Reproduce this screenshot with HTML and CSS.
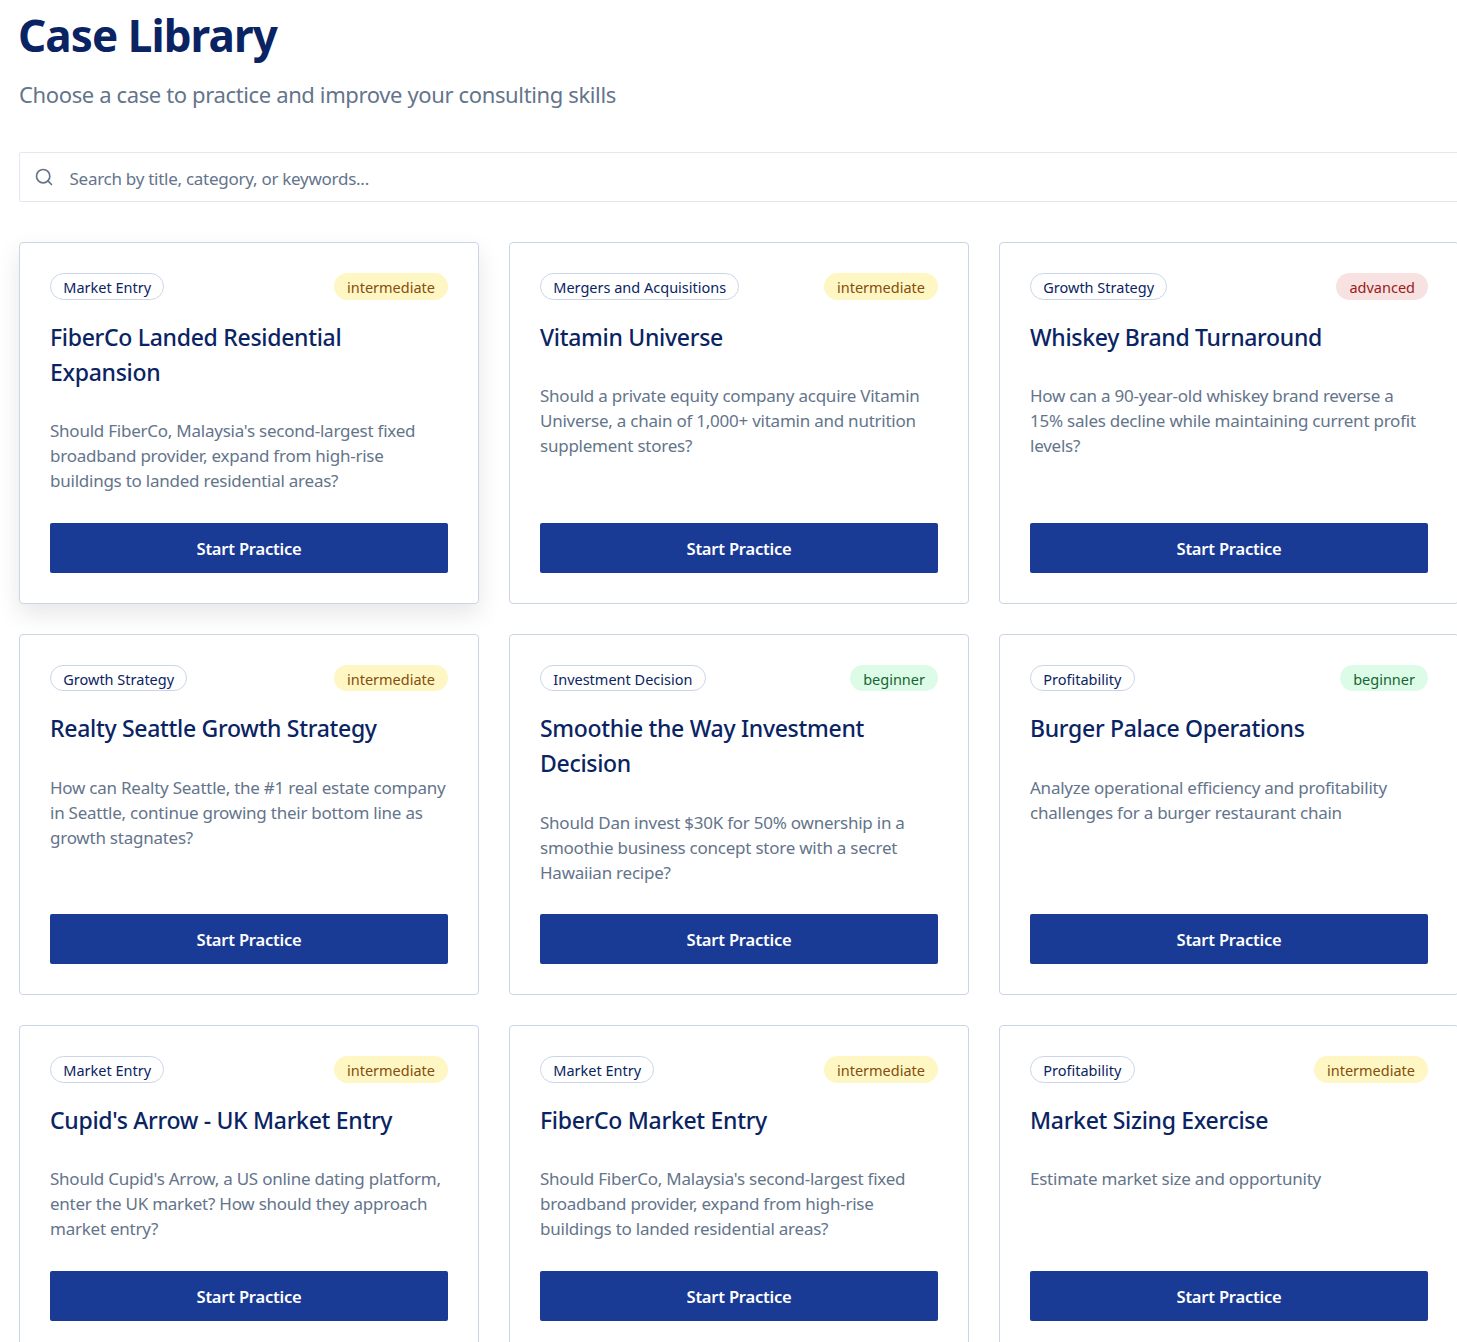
FILE: index.html
```html
<!DOCTYPE html>
<html lang="en">
<head>
<meta charset="utf-8">
<title>Case Library</title>
<link rel="stylesheet" href="styles.css">
</head>
<body>
<main class="page">
  <h1 class="page-title">Case Library</h1>
  <p class="page-sub">Choose a case to practice and improve your consulting skills</p>
  <div class="search">
    <svg class="search-icon" viewBox="0 0 24 24" width="20" height="20" fill="none" stroke="#64748b" stroke-width="2" stroke-linecap="round" stroke-linejoin="round"><circle cx="11" cy="11" r="8"/><path d="m21 21-4.3-4.3"/></svg>
    <span class="search-text">Search by title, category, or keywords...</span>
  </div>
  <section class="grid">
    <article class="card hover"><div class="meta"><span class="cat">Market Entry</span><span class="lvl mid">intermediate</span></div><h2>FiberCo Landed Residential Expansion</h2><p>Should FiberCo, Malaysia's second-largest fixed broadband provider, expand from high-rise buildings to landed residential areas?</p><a class="btn">Start Practice</a></article>
    <article class="card"><div class="meta"><span class="cat">Mergers and Acquisitions</span><span class="lvl mid">intermediate</span></div><h2>Vitamin Universe</h2><p>Should a private equity company acquire Vitamin Universe, a chain of 1,000+ vitamin and nutrition supplement stores?</p><a class="btn">Start Practice</a></article>
    <article class="card"><div class="meta"><span class="cat">Growth Strategy</span><span class="lvl adv">advanced</span></div><h2>Whiskey Brand Turnaround</h2><p>How can a 90-year-old whiskey brand reverse a 15% sales decline while maintaining current profit levels?</p><a class="btn">Start Practice</a></article>
    <article class="card"><div class="meta"><span class="cat">Growth Strategy</span><span class="lvl mid">intermediate</span></div><h2>Realty Seattle Growth Strategy</h2><p>How can Realty Seattle, the #1 real estate company in Seattle, continue growing their bottom line as growth stagnates?</p><a class="btn">Start Practice</a></article>
    <article class="card"><div class="meta"><span class="cat">Investment Decision</span><span class="lvl beg">beginner</span></div><h2>Smoothie the Way Investment Decision</h2><p>Should Dan invest $30K for 50% ownership in a smoothie business concept store with a secret Hawaiian recipe?</p><a class="btn">Start Practice</a></article>
    <article class="card"><div class="meta"><span class="cat">Profitability</span><span class="lvl beg">beginner</span></div><h2>Burger Palace Operations</h2><p>Analyze operational efficiency and profitability challenges for a burger restaurant chain</p><a class="btn">Start Practice</a></article>
    <article class="card"><div class="meta"><span class="cat">Market Entry</span><span class="lvl mid">intermediate</span></div><h2>Cupid's Arrow - UK Market Entry</h2><p>Should Cupid's Arrow, a US online dating platform, enter the UK market? How should they approach market entry?</p><a class="btn">Start Practice</a></article>
    <article class="card"><div class="meta"><span class="cat">Market Entry</span><span class="lvl mid">intermediate</span></div><h2>FiberCo Market Entry</h2><p>Should FiberCo, Malaysia's second-largest fixed broadband provider, expand from high-rise buildings to landed residential areas?</p><a class="btn">Start Practice</a></article>
    <article class="card"><div class="meta"><span class="cat">Profitability</span><span class="lvl mid">intermediate</span></div><h2>Market Sizing Exercise</h2><p>Estimate market size and opportunity</p><a class="btn">Start Practice</a></article>
  </section>
</main>
</body>
</html>
```
FILE: styles.css
```css
* { box-sizing: border-box; }
html, body { margin: 0; height: 100%; overflow: hidden; background: #fff; }
body { font-family: "Noto Sans", "Open Sans", sans-serif; line-height: 1.6; color: #0a2463; }
.page { width: 1440px; margin-left: 19px; }
.page-title { margin: 0 0 0 -1px; padding-top: 5px; font-size: 44px; font-weight: 700; line-height: 60px; color: #0a2463; letter-spacing: -0.92px; }
.page-sub { margin: 12px 0 0; font-size: 22px; line-height: 35px; color: #64748b; letter-spacing: -0.37px; }
.search { display: flex; align-items: center; height: 50px; margin-top: 40px; padding-left: 14px; gap: 15.5px; background: #fff; border: 1px solid #e2e8f0; border-radius: 2px; }
.search-icon { flex: none; }
.search-text { padding-top: 3px; font-size: 17px; color: #64748b; letter-spacing: -0.27px; }
.grid { display: grid; grid-template-columns: repeat(3, 460px); gap: 30px; margin-top: 40px; }
.card { display: flex; flex-direction: column; padding: 30px; background: #fff; border: 1px solid #cbd5e8; border-radius: 4px; }
.hover { box-shadow: 0 10px 25px rgba(0, 0, 0, 0.1); }
.meta { display: flex; justify-content: space-between; align-items: center; }
.cat, .lvl { font-size: 14.5px; height: 26.5px; border-radius: 14px; }
.cat { border: 1px solid #cbd5e8; color: #0a2463; padding: 0 12.25px; line-height: 26px; }
.lvl { padding: 0 13px; line-height: 28px; }
.mid { background: #fef7c3; color: #854d0e; }
.adv { background: #f8e1e1; color: #991b1b; }
.beg { background: #dcfce7; color: #166534; }
.card h2 { margin: 20px 0 0; font-size: 23px; font-weight: 500; line-height: 35px; color: #0a2463; letter-spacing: -0.3px; }
.card p { flex: 1; margin: 28.5px 0 29.5px; font-size: 17px; line-height: 25px; color: #64748b; letter-spacing: -0.24px; }
.btn { display: block; height: 50px; line-height: 51px; text-align: center; background: #193b95; color: #fff; font-size: 16.5px; font-weight: 600; letter-spacing: -0.2px; border-radius: 2px; }
```
